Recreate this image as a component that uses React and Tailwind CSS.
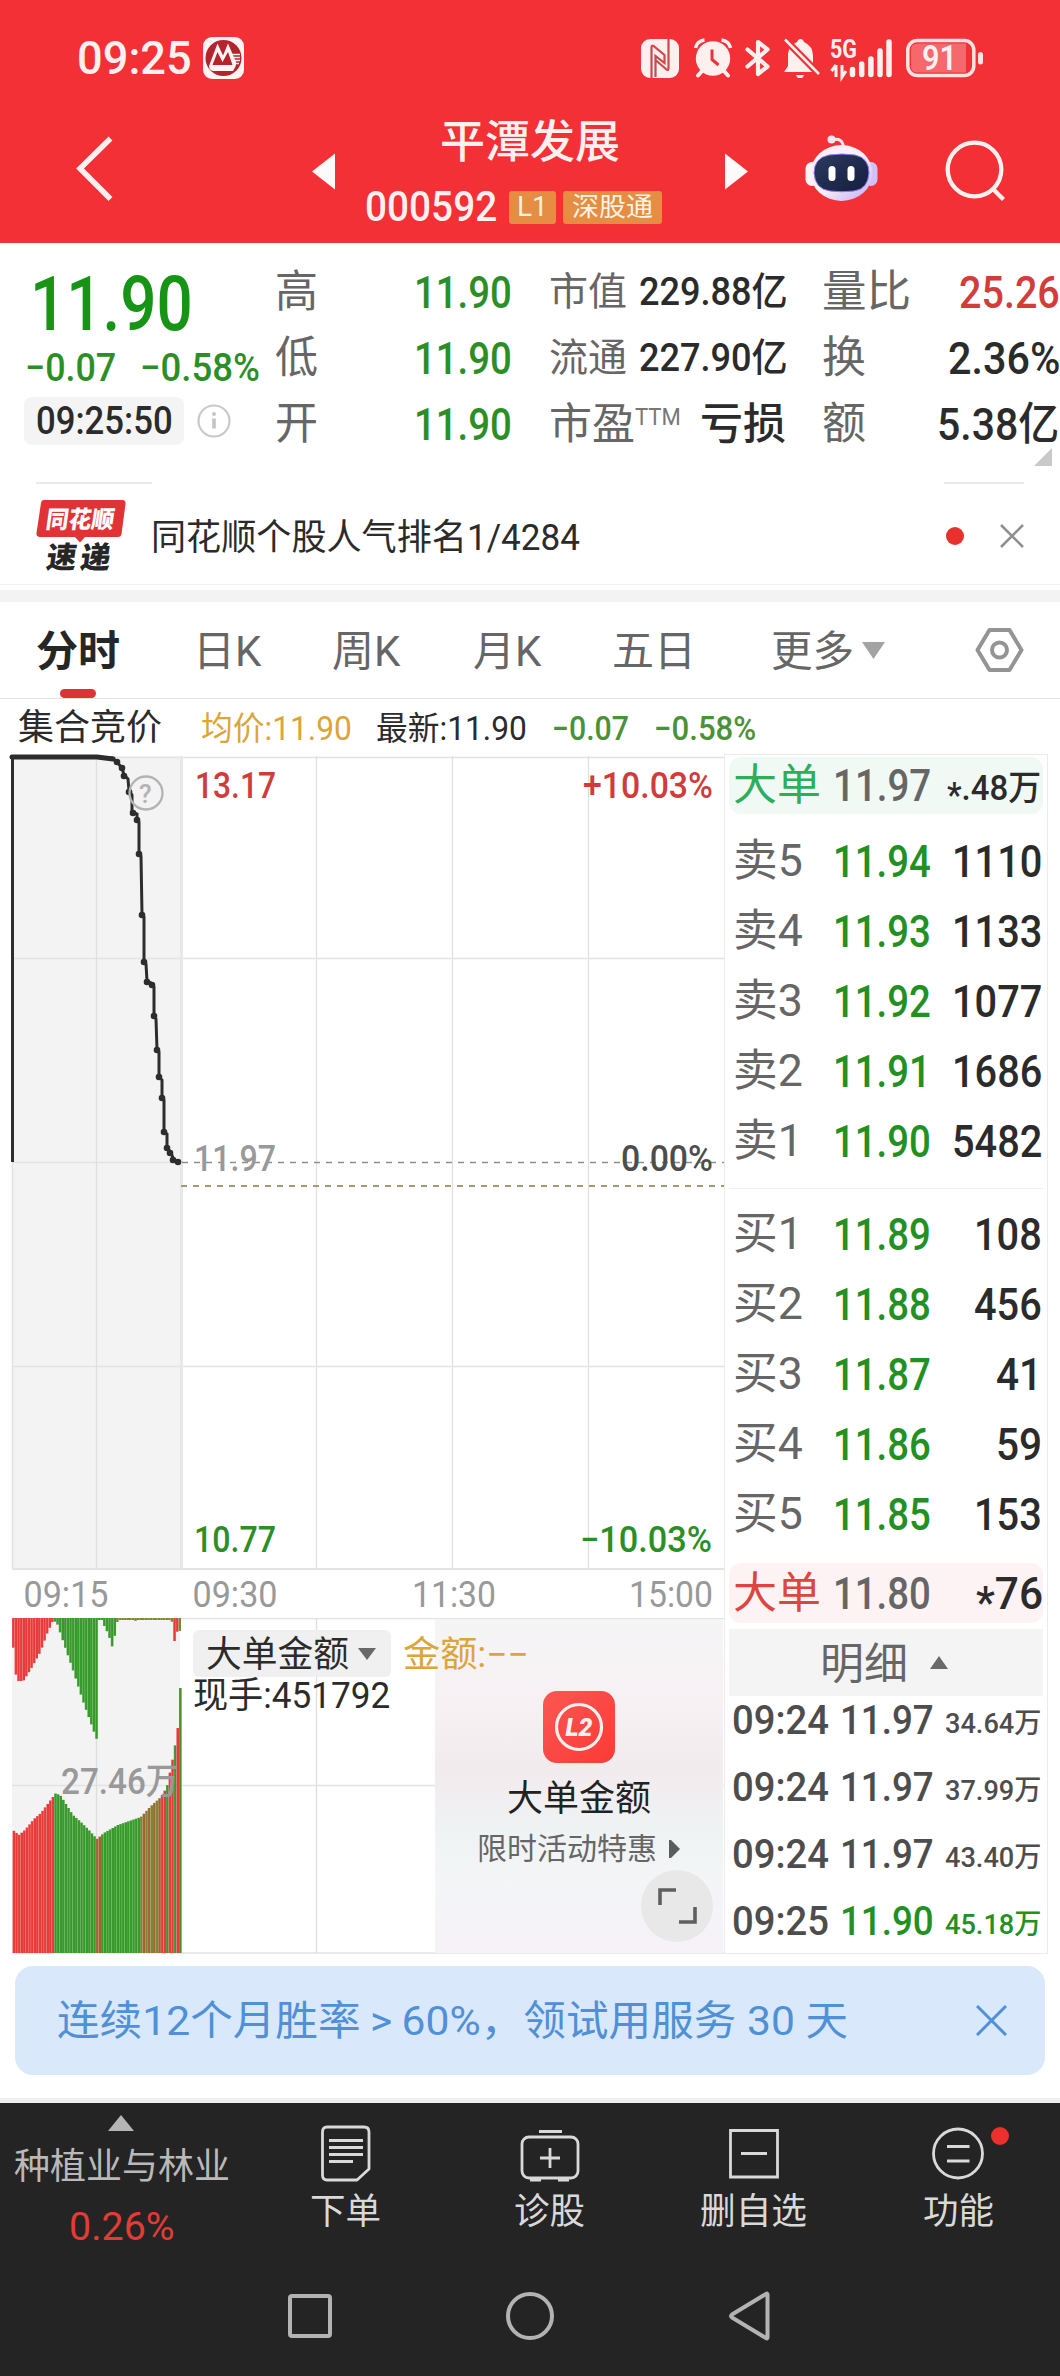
import React, { useLayoutEffect, useRef, useState } from 'react';

const SANS = "font-['Roboto','Noto_Sans_CJK_SC',sans-serif]";

// One line of text, stretched or squeezed to the width of its box
const Fit = ({ className = '', children }) => {
  const box = useRef(null);
  const line = useRef(null);
  const [scale, setScale] = useState(1);

  useLayoutEffect(() => {
    setScale(box.current.clientWidth / line.current.offsetWidth);
  }, [children]);

  return (
    <div ref={box} className={`shrink-0 whitespace-nowrap leading-none ${className}`}>
      <span ref={line} className="inline-block origin-left" style={{ transform: `scaleX(${scale})` }}>
        {children}
      </span>
    </div>
  );
};

const StatusBar = () => (
  <div className="flex h-[116px] items-center text-[#fff0f0]">
    <Fit className="ml-[77px] w-[115px] text-[46px] font-medium">09:25</Fit>
    <svg className="ml-[11px] h-[42px] w-[41px] shrink-0" viewBox="0 0 41 42">
      <rect width="41" height="42" rx="9" fill="#fff4f4" />
      <circle cx="20.500" cy="21" r="18" fill="#b5232c" />
      <path d="M6 29 L14.500 6.500 L20 18.500 L25 6.500 L33 25 Q34 28 30 34 H10 Q6 33 6 29Z" fill="#fff4f4" />
      <path d="M9.500 28 L14.500 15 L19.500 25 L25 15 L29.500 28Z" fill="#b5232c" />
      <path d="M29 17.500h8M31 20.500h6M32 23.500h5M32 26.500h4" stroke="#fff4f4" strokeWidth="1.300" />
    </svg>
    <svg className="ml-[397px] h-[39px] w-[38px] shrink-0" viewBox="0 0 38 39">
      <rect width="38" height="39" rx="9" fill="#fff0f0" />
      <path d="M10.500 39V8.500q0-2.500 2-1.500L23.500 16V24L14.500 17V38M27.500 0v29q0 3-2 1.500L14.500 21" fill="none" stroke="#c94a4c" strokeWidth="2.200" />
    </svg>
    <svg className="ml-[15px] h-[40px] w-[38px] shrink-0" viewBox="0 0 38 40">
      <circle cx="19" cy="20.500" r="17.200" fill="#fff0f0" />
      <path d="M1.500 10Q3 3 10.500 2M36.500 10Q35 3 27.500 2" fill="none" stroke="#fff0f0" strokeWidth="3.500" />
      <path d="M8 33l-4 4.500M30 33l4 4.500" stroke="#fff0f0" strokeWidth="4" strokeLinecap="round" />
      <path d="M18 11.500v10l6.500 5.500" fill="none" stroke="#ee3338" strokeWidth="3" />
    </svg>
    <svg className="ml-[13px] h-[38px] w-[26px] shrink-0" viewBox="0 0 26 38">
      <path d="M2.500 10.500L22.500 27.500L13 35V3L22.500 10.500L2.500 27.500" fill="none" stroke="#fff0f0" strokeWidth="4.200" strokeLinejoin="round" strokeLinecap="round" />
    </svg>
    <svg className="ml-[12px] h-[40px] w-[38px] shrink-0" viewBox="0 0 38 40">
      <path d="M1 34L5 28V16Q6 7 14 4Q15 1 18 1Q20 1 21 4Q30 8 30 18V27L34 34Z" fill="#fff0f0" />
      <path d="M13 37h8q-1 3.500-4 3.500t-4-3.500" fill="#fff0f0" />
      <path d="M2 1.500L36 36" stroke="#f23036" strokeWidth="7" />
      <path d="M2 1.500L36 36" stroke="#fff0f0" strokeWidth="2.500" />
    </svg>
    <svg className="ml-[10px] h-[40px] w-[62px] shrink-0 overflow-visible" viewBox="0 0 62 40">
      <text x="-1" y="19.500" fontSize="25" fontWeight="700" textLength="27" lengthAdjust="spacingAndGlyphs" fill="#fff0f0">5G</text>
      <path d="M5 27v12M0.500 33L5 27M11 27v12L15 33" fill="none" stroke="#fff0f0" strokeWidth="3" />
      <path d="M21.500 31.500v5M30.700 26v10.500M39.900 21v15.500M49 13v23.500M58 4v32.500" stroke="#fff0f0" strokeWidth="5.500" strokeLinecap="round" />
    </svg>
    <svg className="ml-[13px] h-[40px] w-[78px] shrink-0" viewBox="0 0 78 40">
      <rect x="1.800" y="2.500" width="66" height="35" rx="9.500" fill="none" stroke="#ffe3e4" strokeWidth="3.500" />
      <path d="M11 5.500h49v29h-49q-6 0-6-6v-17q0-6 6-6" fill="#f5696d" />
      <text x="16" y="32" fontSize="35" fontWeight="600" textLength="35" lengthAdjust="spacingAndGlyphs" fill="#fff0f0">91</text>
      <rect x="72" y="14" width="5" height="12.500" rx="2.500" fill="#ffe3e4" />
    </svg>
  </div>
);

const Robot = () => (
  <svg className="ml-[57px] mt-[18px] h-[70px] w-[73px] shrink-0" viewBox="0 0 73 70">
    <defs>
      <linearGradient id="shell" x1="0" y1="0" x2="1" y2="1">
        <stop offset="0.500" stopColor="#fff0f8" />
        <stop offset="1" stopColor="#b9a9f5" />
      </linearGradient>
      <linearGradient id="visor" x1="0" y1="0" x2="1" y2="1">
        <stop offset="0" stopColor="#2c3a5e" />
        <stop offset="1" stopColor="#141d3f" />
      </linearGradient>
    </defs>
    <path d="M27 6Q38 3 38.500 14" fill="none" stroke="#fbe6ef" strokeWidth="3" />
    <circle cx="26.500" cy="5.500" r="4" fill="#fbe6ef" />
    <rect x="0.500" y="28" width="13" height="24" rx="6.500" fill="#fff2f8" />
    <rect x="59.500" y="28" width="13" height="24" rx="6.500" fill="#cfc0f8" />
    <ellipse cx="36.500" cy="39" rx="31" ry="28" fill="url(#shell)" />
    <path d="M9 39Q9 24 24 21Q37 19 50 21Q64 24 64 39Q63 55 49 57Q37 58.500 25 57Q10 55 9 39Z" fill="url(#visor)" stroke="#8d7bf0" strokeWidth="1" />
    <rect x="23.500" y="32" width="7" height="15" rx="3.500" fill="#fff" />
    <rect x="42.500" y="32" width="7" height="15" rx="3.500" fill="#fff" />
  </svg>
);

const Header = () => (
  <div className="h-[243px] bg-[#f23036]">
    <StatusBar />
    <div className="flex h-[127px] items-start text-[#fff0f0]">
      <svg className="ml-[74px] mt-[20px] h-[66px] w-[42px] shrink-0" viewBox="0 0 42 66">
        <path d="M36.500 2.500L6 32.500L36.500 63" fill="none" stroke="#fff0f0" strokeWidth="5.500" />
      </svg>
      <svg className="ml-[196px] mt-[37px] h-[37px] w-[23px] shrink-0" viewBox="0 0 23 37">
        <path d="M0 18.500L23 0.500V36.500Z" fill="#fffafa" />
      </svg>
      <div className="ml-[30px] w-[300px] shrink-0">
        <Fit className="ml-[75px] mt-[4px] w-[180px] text-[45px] font-medium">平潭发展</Fit>
        <div className="mt-[25px] flex h-[34px] items-center">
          <Fit className="w-[132px] text-[42px] font-medium">000592</Fit>
          <div className="ml-[12px] flex h-[33px] w-[47px] items-center justify-center rounded-[3px] bg-[#e58d43] text-[#fff3e4]">
            <Fit className="w-[31px] text-[28px]">L1</Fit>
          </div>
          <div className="ml-[7px] flex h-[33px] w-[99px] items-center justify-center rounded-[3px] bg-[#e58d43] text-[#fff3e4]">
            <Fit className="w-[81px] text-[26px]">深股通</Fit>
          </div>
        </div>
      </div>
      <svg className="ml-[60px] mt-[37px] h-[37px] w-[23px] shrink-0" viewBox="0 0 23 37">
        <path d="M23 18.500L0 0.500V36.500Z" fill="#fffafa" />
      </svg>
      <Robot />
      <svg className="ml-[67px] mt-[24px] h-[64px] w-[62px] shrink-0" viewBox="0 0 62 64">
        <circle cx="29.500" cy="29.500" r="26.800" fill="none" stroke="#fff0f0" strokeWidth="4.300" />
        <path d="M47.500 48.500L58.500 59.500" stroke="#fff0f0" strokeWidth="4.300" />
      </svg>
    </div>
  </div>
);

const Quote = () => (
  <div className="relative flex h-[239px] text-[#2b2b2b]">
    <div className="w-[272px] shrink-0 pt-[23px]">
      <Fit className="ml-[30px] w-[163px] text-[76px] font-medium text-[#159415]">11.90</Fit>
      <div className="mt-[6px] flex h-[40px] items-center text-[39px] font-medium text-[#2b8f26]">
        <Fit className="ml-[25px] w-[91px]">−0.07</Fit>
        <Fit className="ml-[24px] w-[120px]">−0.58%</Fit>
      </div>
      <div className="mt-[9px] flex h-[48px] items-center">
        <div className="ml-[24px] flex h-[48px] w-[160px] items-center justify-center rounded-lg bg-[#f4f4f4]">
          <Fit className="w-[137px] text-[39px] font-medium">09:25:50</Fit>
        </div>
        <svg className="ml-[13px] h-[36px] w-[36px]" viewBox="0 0 36 36">
          <circle cx="17" cy="18" r="15.500" fill="none" stroke="#c9c9c9" strokeWidth="2.200" />
          <path d="M17 15.500v10" stroke="#c4c4c4" strokeWidth="3.600" />
          <circle cx="17" cy="11" r="1.900" fill="#c4c4c4" />
        </svg>
      </div>
    </div>
    <div className="w-[274px] shrink-0 pt-[16px]">
      {['高', '低', '开'].map((label) => (
        <div key={label} className="flex h-[66px] items-center">
          <Fit className="ml-[3px] w-[43px] text-[44px] text-[#666]">{label}</Fit>
          <Fit className="ml-[96px] w-[98px] text-[45px] font-medium text-[#2b8f26]">11.90</Fit>
        </div>
      ))}
    </div>
    <div className="w-[274px] shrink-0 pt-[16px]">
      <div className="flex h-[66px] items-center text-[39px]">
        <Fit className="ml-[3px] w-[78px] text-[#666]">市值</Fit>
        <Fit className="ml-[12px] w-[149px] font-medium">229.88亿</Fit>
      </div>
      <div className="flex h-[66px] items-center text-[39px]">
        <Fit className="ml-[3px] w-[78px] text-[#666]">流通</Fit>
        <Fit className="ml-[12px] w-[149px] font-medium">227.90亿</Fit>
      </div>
      <div className="flex h-[66px] items-center text-[43px]">
        <Fit className="ml-[3px] w-[86px] text-[#666]">市盈</Fit>
        <Fit className="mb-[14px] w-[46px] text-[24px] text-[#777]">TTM</Fit>
        <Fit className="ml-[19px] w-[86px] font-medium">亏损</Fit>
      </div>
    </div>
    <div className="w-[240px] shrink-0 pt-[16px]">
      <div className="flex h-[66px] items-center">
        <Fit className="ml-[2px] w-[89px] text-[44px] text-[#666]">量比</Fit>
        <Fit className="ml-[48px] w-[101px] text-[45px] font-medium text-[#d13d3b]">25.26</Fit>
      </div>
      <div className="flex h-[66px] items-center">
        <Fit className="ml-[2px] w-[44px] text-[44px] text-[#666]">换</Fit>
        <Fit className="ml-[82px] w-[112px] text-[45px] font-medium">2.36%</Fit>
      </div>
      <div className="flex h-[66px] items-center">
        <Fit className="ml-[2px] w-[44px] text-[44px] text-[#666]">额</Fit>
        <Fit className="ml-[71px] w-[122px] text-[45px] font-medium">5.38亿</Fit>
      </div>
    </div>
    <svg className="absolute right-[8px] top-[205px] h-[18px] w-[18px]" viewBox="0 0 18 18">
      <path d="M18 0V18H0Z" fill="#c9c9c9" />
    </svg>
  </div>
);

const News = () => (
  <div>
    <div className="flex h-[2px] justify-between pl-[36px] pr-[36px]">
      <div className="w-[116px] bg-[#e9e9e9]" />
      <div className="w-[80px] bg-[#e9e9e9]" />
    </div>
    <div className="flex h-[101px] items-start border-b border-[#f3f3f3]">
      <svg className="ml-[36px] mt-[16px] h-[74px] w-[90px] shrink-0 overflow-visible" viewBox="0 0 90 74">
        <path d="M8 0H86Q90 0 89.500 4L85.500 34Q85 37 82 37H49L44 42.500L39 37H4Q0 37 0.500 33L5 3Q5.500 0 8 0" fill="#e13236" />
        <g transform="skewX(-8)" fontWeight="900">
          <text x="13" y="28" fontSize="24" textLength="68" lengthAdjust="spacingAndGlyphs" fill="#fff">同花顺</text>
          <text x="19" y="68.500" fontSize="30" textLength="30" lengthAdjust="spacingAndGlyphs" fill="#262626">速</text>
          <text x="53" y="68.500" fontSize="30" textLength="30" lengthAdjust="spacingAndGlyphs" fill="#262626">递</text>
        </g>
      </svg>
      <Fit className="ml-[25px] mt-[36px] w-[429px] text-[36px] text-[#2b2b2b]">同花顺个股人气排名1/4284</Fit>
      <div className="ml-[366px] mt-[43px] h-[18px] w-[18px] rounded-full bg-[#e8302d]" />
      <svg className="ml-[36px] mt-[40px] h-[24px] w-[24px]" viewBox="0 0 24 24">
        <path d="M1 1L23 23M23 1L1 23" stroke="#8f8f8f" strokeWidth="2.600" />
      </svg>
    </div>
    <div className="mt-[5px] h-[12px] bg-[#f3f3f3]" />
  </div>
);

const Tabs = () => (
  <div className="relative flex h-[97px] items-center border-b border-[#e3e3e3] text-[42px] text-[#666]">
    <Fit className="ml-[36px] mt-[3px] w-[84px] font-bold text-[#262626]">分时</Fit>
    <Fit className="ml-[73px] mt-[3px] w-[68px]">日K</Fit>
    <Fit className="ml-[71px] mt-[3px] w-[68px]">周K</Fit>
    <Fit className="ml-[73px] mt-[3px] w-[68px]">月K</Fit>
    <Fit className="ml-[71px] mt-[3px] w-[84px]">五日</Fit>
    <Fit className="ml-[75px] mt-[3px] w-[83px]">更多</Fit>
    <svg className="ml-[8px] h-[17px] w-[23px]" viewBox="0 0 23 17">
      <path d="M0 0H23L11.500 17Z" fill="#a3a3a3" />
    </svg>
    <svg className="ml-[90px] h-[46px] w-[49px]" viewBox="0 0 49 46">
      <path d="M14.500 3H34.500L46.500 23L34.500 43H14.500L2.500 23Z" fill="none" stroke="#949494" strokeWidth="4" strokeLinejoin="round" />
      <circle cx="24.500" cy="23" r="7.500" fill="none" stroke="#949494" strokeWidth="4" />
    </svg>
    <div className="absolute bottom-0 left-[60px] h-[9px] w-[36px] rounded-full bg-[#e03236]" />
  </div>
);

const InfoRow = () => (
  <div className="flex h-[55px] items-center pt-[3px] text-[33px] text-[#2b2b2b]">
    <Fit className="ml-[18px] w-[144px] text-[36px]">集合竞价</Fit>
    <Fit className="ml-[39px] w-[151px] text-[#dba53a]">均价:11.90</Fit>
    <Fit className="ml-[24px] w-[151px]">最新:11.90</Fit>
    <Fit className="ml-[25px] w-[77px] font-medium text-[#4a9138]">−0.07</Fit>
    <Fit className="ml-[25px] w-[102px] font-medium text-[#4a9138]">−0.58%</Fit>
  </div>
);

const pricePath =
  'M12.500 1162V756.500H97L101 758H112L117 762L122 768L124 775L128 779L129 791L132 795V812L137 814V820L139 822V853L141 856L142 914L144 917V961L146 964L147 981L151 983L154 987V1015L156 1019L157 1049L159 1052V1077L162 1080V1098L164 1100V1132L167 1134V1147L171 1153L174 1160L180 1162';
const priceDots = [
  [117, 762], [122, 768], [124, 776], [129, 792], [133, 813], [137, 820], [139, 854], [142, 915], [144, 962], [147, 982],
  [152, 985], [154, 1016], [157, 1050], [159, 1077], [162, 1098], [164, 1132], [167, 1148], [170, 1153], [173, 1160], [178, 1162],
];

const PriceChart = () => (
  <svg className="block h-[864px] w-[724px]" viewBox="0 754 724 864" fontSize="36" fontWeight="500">
    <rect x="12" y="756" width="168" height="813" fill="#f3f3f3" />
    <path d="M12 757.500H724M12 958.500H724M12 1162.500H180M12 1366.500H724" stroke="#e3e3e3" strokeWidth="1.500" fill="none" />
    <path d="M12 1569H724" stroke="#e3e3e3" strokeWidth="2" />
    <path d="M96.500 756V1569M316.500 756V1569M452.500 756V1569M588.500 756V1569" stroke="#e0e0e0" strokeWidth="1.300" />
    <path d="M12.500 1162V1569" stroke="#e3e3e3" strokeWidth="1.500" />
    <path d="M181.500 756V1569" stroke="#e8e8e8" strokeWidth="3" />
    <path d="M182 1162.500H724" stroke="#8e8e8e" strokeWidth="1.600" strokeDasharray="6 6" />
    <path d="M181 1186H724" stroke="#a9986c" strokeWidth="1.800" strokeDasharray="6 6" />
    <path d={pricePath} fill="none" stroke="#2d2d2d" strokeWidth="3" />
    <path d="M12 757H97L113 759" fill="none" stroke="#2d2d2d" strokeWidth="5" strokeLinecap="round" />
    {priceDots.map(([x, y]) => (
      <circle key={y} cx={x} cy={y} r="3.300" fill="#2d2d2d" />
    ))}
    <circle cx="146" cy="793" r="16.500" fill="none" stroke="#b3b3b3" strokeWidth="2.300" />
    <text x="139" y="802.500" fontSize="26" fill="#b3b3b3">?</text>
    <text x="195" y="797.500" textLength="81" lengthAdjust="spacingAndGlyphs" fill="#cf3c3a">13.17</text>
    <text x="583" y="797.500" textLength="130" lengthAdjust="spacingAndGlyphs" fill="#cf3c3a">+10.03%</text>
    <text x="194" y="1171" textLength="82" lengthAdjust="spacingAndGlyphs" fill="#999">11.97</text>
    <text x="621" y="1171" textLength="92" lengthAdjust="spacingAndGlyphs" fill="#4d4d4d">0.00%</text>
    <text x="194" y="1552" textLength="82" lengthAdjust="spacingAndGlyphs" fill="#2b8f26">10.77</text>
    <text x="580" y="1552" textLength="132" lengthAdjust="spacingAndGlyphs" fill="#2b8f26">−10.03%</text>
    <g fill="#999" fontWeight="400">
      <text x="23.500" y="1607" textLength="85" lengthAdjust="spacingAndGlyphs">09:15</text>
      <text x="192.500" y="1607" textLength="85" lengthAdjust="spacingAndGlyphs">09:30</text>
      <text x="412" y="1607" textLength="84" lengthAdjust="spacingAndGlyphs">11:30</text>
      <text x="629" y="1607" textLength="84" lengthAdjust="spacingAndGlyphs">15:00</text>
    </g>
  </svg>
);

const RED = '#e83b39';
const GREEN = '#36992a';
const MIXED = '#a0622f';
const OLIVE = '#7c8632';

// [x, height] outlines of the auction volume, hanging and standing
const hanging = [
  [12, 17], [15, 55], [18, 63], [23, 63], [30, 52], [40, 34], [47, 15], [53, 2], [57, 6], [63, 24], [72, 50],
  [83, 84], [93, 112], [97, 123], [98, 1], [102, 2], [104, 8], [108, 16], [112, 29], [114, 29], [115, 1],
  [116, 7], [118, 1], [133, 1], [134, 4], [137, 1], [169, 2], [172, 4], [174, 24], [176, 14], [179, 13], [182, 13],
];
const standing = [
  [12, 123], [18, 118], [24, 123], [33, 134], [40, 140], [55, 160], [60, 157], [72, 138], [80, 131], [88, 123],
  [96, 114], [103, 120], [117, 128], [140, 136], [150, 147], [160, 156], [166, 166], [171, 190], [175, 212],
  [177.5, 230], [178.5, 265], [182, 265],
];

const valueAt = (points, x) => {
  const i = points.findIndex(([px]) => px >= x);
  if (i <= 0) return points[0][1];
  const [x0, y0] = points[i - 1];
  const [x1, y1] = points[i];
  return y0 + ((y1 - y0) * (x - x0)) / (x1 - x0);
};

const standingColor = (x, i) => {
  if (x < 53) return RED;
  if (x < 94) return GREEN;
  if (x < 99) return MIXED;
  if (x < 139) return GREEN;
  if (x < 160) return i % 2 ? OLIVE : MIXED;
  if (x > 177) return '#4f8a2e';
  return i % 3 === 2 ? GREEN : RED;
};

const hangingColor = (x) => {
  if (x < 53) return RED;
  if (x < 116) return GREEN;
  if (x > 172 && x < 177) return RED;
  return OLIVE;
};

const step = 2.6;
const bars = Array.from({ length: 65 }, (_, i) => 12 + i * step);

const VolumeBars = () => (
  <svg className="absolute left-0 top-0 h-[336px] w-[724px]" viewBox="0 1618 724 336">
    <rect x="12" y="1618" width="168" height="335" fill="#f3f3f3" />
    <path d="M12 1618.500H724M12 1785.500H724M12 1953H724" stroke="#e3e3e3" strokeWidth="1.500" />
    <path d="M96.500 1618V1953M316.500 1618V1953" stroke="#dedede" strokeWidth="1.300" />
    {bars.map((x, i) => (
      <g key={x}>
        <rect x={x} y="1618" width={step} height={Math.max(2, valueAt(hanging, x + 1))} fill={hangingColor(x)} />
        <rect x={x + 0.6} y={1953 - valueAt(standing, x + 1)} width={step} height={valueAt(standing, x + 1)} fill={standingColor(x, i)} />
        <rect x={x + 0.6} y={1953 - valueAt(standing, x + 1)} width="0.500" height={valueAt(standing, x + 1)} fill="#fff" opacity="0.200" />
        <rect x={x} y="1618" width="0.500" height={valueAt(hanging, x + 1)} fill="#fff" opacity="0.200" />
      </g>
    ))}
    <text x="61" y="1794" fontSize="36" fontWeight="500" textLength="118" lengthAdjust="spacingAndGlyphs" fill="#999">27.46万</text>
  </svg>
);

const VolumeChart = () => (
  <div className="relative flex h-[336px] w-[724px]">
    <VolumeBars />
    <div className="relative z-10 ml-[193px] w-[198px] shrink-0 pt-[12px] text-[#2b2b2b]">
      <div className="flex h-[47px] items-center rounded-md bg-[#eeeeee]/90">
        <Fit className="ml-[13px] mt-[3px] w-[143px] text-[36px]">大单金额</Fit>
        <svg className="ml-[9px] h-[12px] w-[18px]" viewBox="0 0 18 12">
          <path d="M0 0H18L9 12Z" fill="#686868" />
        </svg>
      </div>
      <Fit className="mt-[1px] w-[197px] text-[36px]">现手:451792</Fit>
    </div>
    <Fit className="relative z-10 ml-[12px] mt-[19px] h-[36px] w-[126px] text-[36px] text-[#dba53a]">金额:−−</Fit>
    <div className="absolute left-[435px] top-[1px] flex h-[334px] w-[288px] flex-col items-center bg-[linear-gradient(180deg,#f5f5f6_0%,#f7f0f3_28%,#f2ebee_45%,#eff2f3_62%,#f3f5f7_78%,#f6f2f8_100%)]">
      <svg className="mt-[72px] h-[72px] w-[72px] shrink-0" viewBox="0 0 72 72">
        <defs>
          <linearGradient id="tile" x1="0" y1="0" x2="1" y2="1">
            <stop offset="0" stopColor="#fb5753" />
            <stop offset="1" stopColor="#fb3a35" />
          </linearGradient>
        </defs>
        <rect width="72" height="72" rx="14" fill="url(#tile)" />
        <circle cx="36" cy="36" r="22.500" fill="none" stroke="#fff0f0" strokeWidth="3.200" />
        <text x="22.500" y="45" fontSize="25" fontWeight="900" fontStyle="italic" textLength="27" lengthAdjust="spacingAndGlyphs" fill="#fff0f0">L2</text>
      </svg>
      <Fit className="mt-[18px] w-[144px] text-[36px] text-[#222]">大单金额</Fit>
      <div className="mt-[17px] flex h-[30px] items-center">
        <Fit className="w-[180px] text-[30px] text-[#666]">限时活动特惠</Fit>
        <svg className="ml-[12px] h-[18px] w-[12px]" viewBox="0 0 12 18">
          <path d="M0 0H2L11 9L2 18H0Z" fill="#5c5c5c" />
        </svg>
      </div>
      <svg className="absolute left-[206px] top-[251px] h-[72px] w-[72px]" viewBox="0 0 72 72">
        <circle cx="36" cy="36" r="36" fill="#e9e8e9" />
        <path d="M19 35V20H35M54 37V52H38" fill="none" stroke="#5f5f5f" strokeWidth="3.600" />
      </svg>
    </div>
  </div>
);

const sells = [
  ['卖5', '11.94', '1110'],
  ['卖4', '11.93', '1133'],
  ['卖3', '11.92', '1077'],
  ['卖2', '11.91', '1686'],
  ['卖1', '11.90', '5482'],
];
const buys = [
  ['买1', '11.89', '108'],
  ['买2', '11.88', '456'],
  ['买3', '11.87', '41'],
  ['买4', '11.86', '59'],
  ['买5', '11.85', '153'],
];
const details = [
  ['09:24', '11.97', '34.64万', false],
  ['09:24', '11.97', '37.99万', false],
  ['09:24', '11.97', '43.40万', false],
  ['09:25', '11.90', '45.18万', true],
];
const qtyWidth = { 2: 'w-[46px]', 3: 'w-[68px]', 4: 'w-[90px]' };

const Star = () => <span className="inline-block translate-y-[0.2em]">*</span>;

const Level = ({ row: [label, price, qty] }) => (
  <div className="flex h-[70px] items-center">
    <Fit className="ml-[4px] w-[70px] text-[44px] text-[#666]">{label}</Fit>
    <Fit className="ml-[30px] w-[98px] text-[45px] font-medium text-[#229022]">{price}</Fit>
    <div className="mr-[1px] flex flex-1 justify-end">
      <Fit className={`text-[45px] font-medium text-[#2b2b2b] ${qtyWidth[qty.length]}`}>{qty}</Fit>
    </div>
  </div>
);

const OrderBook = () => (
  <div className="h-[1200px] w-[324px] border border-[#ebebeb] pl-[4px] pr-[4px]">
    <div className="mt-[2px] flex h-[57px] items-center rounded-xl bg-[#f1f9f5]">
      <Fit className="ml-[4px] w-[88px] text-[43px] text-[#2eae5b]">大单</Fit>
      <Fit className="ml-[12px] w-[98px] text-[44px] font-medium text-[#666]">11.97</Fit>
      <Fit className="ml-[16px] mt-[5px] w-[94px] text-[35px] font-medium text-[#2b2b2b]"><Star />.48万</Fit>
    </div>
    <div className="mt-[12px]">
      {sells.map((row) => <Level key={row[0]} row={row} />)}
    </div>
    <div className="mt-[12px] h-[1px] bg-[#f0f0f0]" />
    <div className="mt-[10px]">
      {buys.map((row) => <Level key={row[0]} row={row} />)}
    </div>
    <div className="mt-[14px] flex h-[60px] items-center rounded-xl bg-[#fdf3f4]">
      <Fit className="ml-[4px] w-[88px] text-[43px] text-[#dc4540]">大单</Fit>
      <Fit className="ml-[12px] w-[98px] text-[45px] font-medium text-[#666]">11.80</Fit>
      <Fit className="ml-[45px] w-[67px] text-[45px] font-medium text-[#2b2b2b]"><Star />76</Fit>
    </div>
    <div className="mt-[6px] flex h-[67px] items-center bg-[#f4f4f4]">
      <Fit className="ml-[91px] mt-[3px] w-[88px] text-[43px] text-[#666]">明细</Fit>
      <svg className="ml-[22px] h-[13px] w-[18px]" viewBox="0 0 18 13">
        <path d="M0 13H18L9 0Z" fill="#6a6a6a" />
      </svg>
    </div>
    <div className="mt-[4px] flex flex-col gap-[27px]">
      {details.map(([time, price, amount, down]) => (
        <div key={amount} className={`flex h-[40px] items-center font-medium ${down ? 'text-[#229022]' : 'text-[#4d4d4d]'}`}>
          <Fit className="ml-[3px] w-[97px] text-[41px] text-[#4d4d4d]">{time}</Fit>
          <Fit className="ml-[11px] w-[94px] text-[41px]">{price}</Fit>
          <Fit className="ml-[11px] mt-[8px] w-[96px] text-[28px]">{amount}</Fit>
        </div>
      ))}
    </div>
  </div>
);

const Banner = () => (
  <div className="mx-[15px] mt-[12px] flex h-[109px] items-center rounded-[18px] bg-[#d9e8fa] text-[#4f90d6]">
    <Fit className="ml-[42px] mt-[2px] w-[791px] text-[41px]">
      连续12个月胜率<span className="mx-[9px]">&gt;</span>60%，领试用服务 30 天
    </Fit>
    <svg className="ml-[128px] h-[31px] w-[31px]" viewBox="0 0 31 31">
      <path d="M1 1L30 30M30 1L1 30" stroke="#4f90d6" strokeWidth="3" />
    </svg>
  </div>
);

const BottomBar = () => (
  <div className="flex h-[137px] text-[36px] text-[#d9d9d9]">
    <div className="flex w-[242px] flex-col items-center pt-[12px] text-[#b9b9b9]">
      <svg className="h-[16px] w-[26px] shrink-0" viewBox="0 0 26 16">
        <path d="M0 16H26L13 0Z" fill="#b5b5b5" />
      </svg>
      <Fit className="mt-[18px] ml-[2px] w-[216px]">种植业与林业</Fit>
      <Fit className="mt-[23px] ml-[2px] w-[106px] text-[39px] text-[#e23c35]">0.26%</Fit>
    </div>
    <div className="flex w-[207px] flex-col items-center pt-[21px]">
      <svg className="h-[58px] w-[50px] shrink-0" viewBox="0 0 50 58">
        <path d="M6 3H43Q48 3 48 8V45L36 56H6Q1.500 56 1.500 51V8Q1.500 3 6 3Z" fill="none" stroke="#d9d9d9" strokeWidth="2.800" strokeLinejoin="round" />
        <path d="M8 16.500H42M8 23.500H42M8 30.500H42M8 37.500H32" stroke="#d9d9d9" strokeWidth="2.800" />
      </svg>
      <Fit className="mt-[12px] w-[71px]">下单</Fit>
    </div>
    <div className="flex w-[201px] flex-col items-center pt-[21px]">
      <svg className="h-[58px] w-[60px] shrink-0" viewBox="0 0 60 58">
        <path d="M19 7.500H42" stroke="#d9d9d9" strokeWidth="3" />
        <rect x="2" y="13" width="56" height="41" rx="7" fill="none" stroke="#d9d9d9" strokeWidth="2.800" />
        <path d="M30 24V44M20 34H40" stroke="#d9d9d9" strokeWidth="2.800" />
        <path d="M10 55.500H21M38 55.500H49" stroke="#d9d9d9" strokeWidth="4" />
      </svg>
      <Fit className="mt-[12px] w-[71px]">诊股</Fit>
    </div>
    <div className="flex w-[207px] flex-col items-center pt-[21px]">
      <svg className="h-[58px] w-[50px] shrink-0" viewBox="0 0 50 58">
        <path d="M1.500 6.500H48.500V53H1.500ZM12 29.500H38" fill="none" stroke="#d9d9d9" strokeWidth="2.800" />
      </svg>
      <Fit className="mt-[12px] w-[107px]">删自选</Fit>
    </div>
    <div className="relative flex w-[203px] flex-col items-center pt-[21px]">
      <svg className="h-[58px] w-[54px] shrink-0" viewBox="0 0 54 58">
        <circle cx="26" cy="29.500" r="24.500" fill="none" stroke="#d9d9d9" strokeWidth="2.800" />
        <path d="M15 22.500H37.500M15 37H37.500" stroke="#d9d9d9" strokeWidth="3" />
      </svg>
      <Fit className="mt-[12px] w-[71px]">功能</Fit>
      <div className="absolute left-[134px] top-[24px] h-[18px] w-[18px] rounded-full bg-[#ee302d]" />
    </div>
  </div>
);

const SystemNav = () => (
  <div className="flex h-[136px] items-start">
    <div className="ml-[288px] mt-[54px] h-[44px] w-[44px] rounded-[4px] border-[4px] border-[#b3b3b3]" />
    <div className="ml-[174px] mt-[52px] h-[48px] w-[48px] rounded-full border-[4px] border-[#b3b3b3]" />
    <svg className="ml-[174px] mt-[50px] h-[52px] w-[44px]" viewBox="0 0 44 52">
      <path d="M39.500 4.500V47.500Q39.500 49 38 48L4 27.500Q2 26 4 24.500L38 4Q39.500 3 39.500 4.500Z" fill="none" stroke="#b3b3b3" strokeWidth="4" strokeLinejoin="round" />
    </svg>
  </div>
);

export default function App() {
  return (
    <div className={`h-[2376px] w-[1060px] overflow-hidden bg-white ${SANS}`}>
      <Header />
      <Quote />
      <News />
      <Tabs />
      <InfoRow />
      <div className="flex">
        <div className="w-[724px] shrink-0">
          <PriceChart />
          <VolumeChart />
        </div>
        <OrderBook />
      </div>
      <Banner />
      <div className="mt-[23px] h-[5px] bg-[#efefef]" />
      <div className="h-[273px] bg-[#242424]">
        <BottomBar />
        <SystemNav />
      </div>
    </div>
  );
}
